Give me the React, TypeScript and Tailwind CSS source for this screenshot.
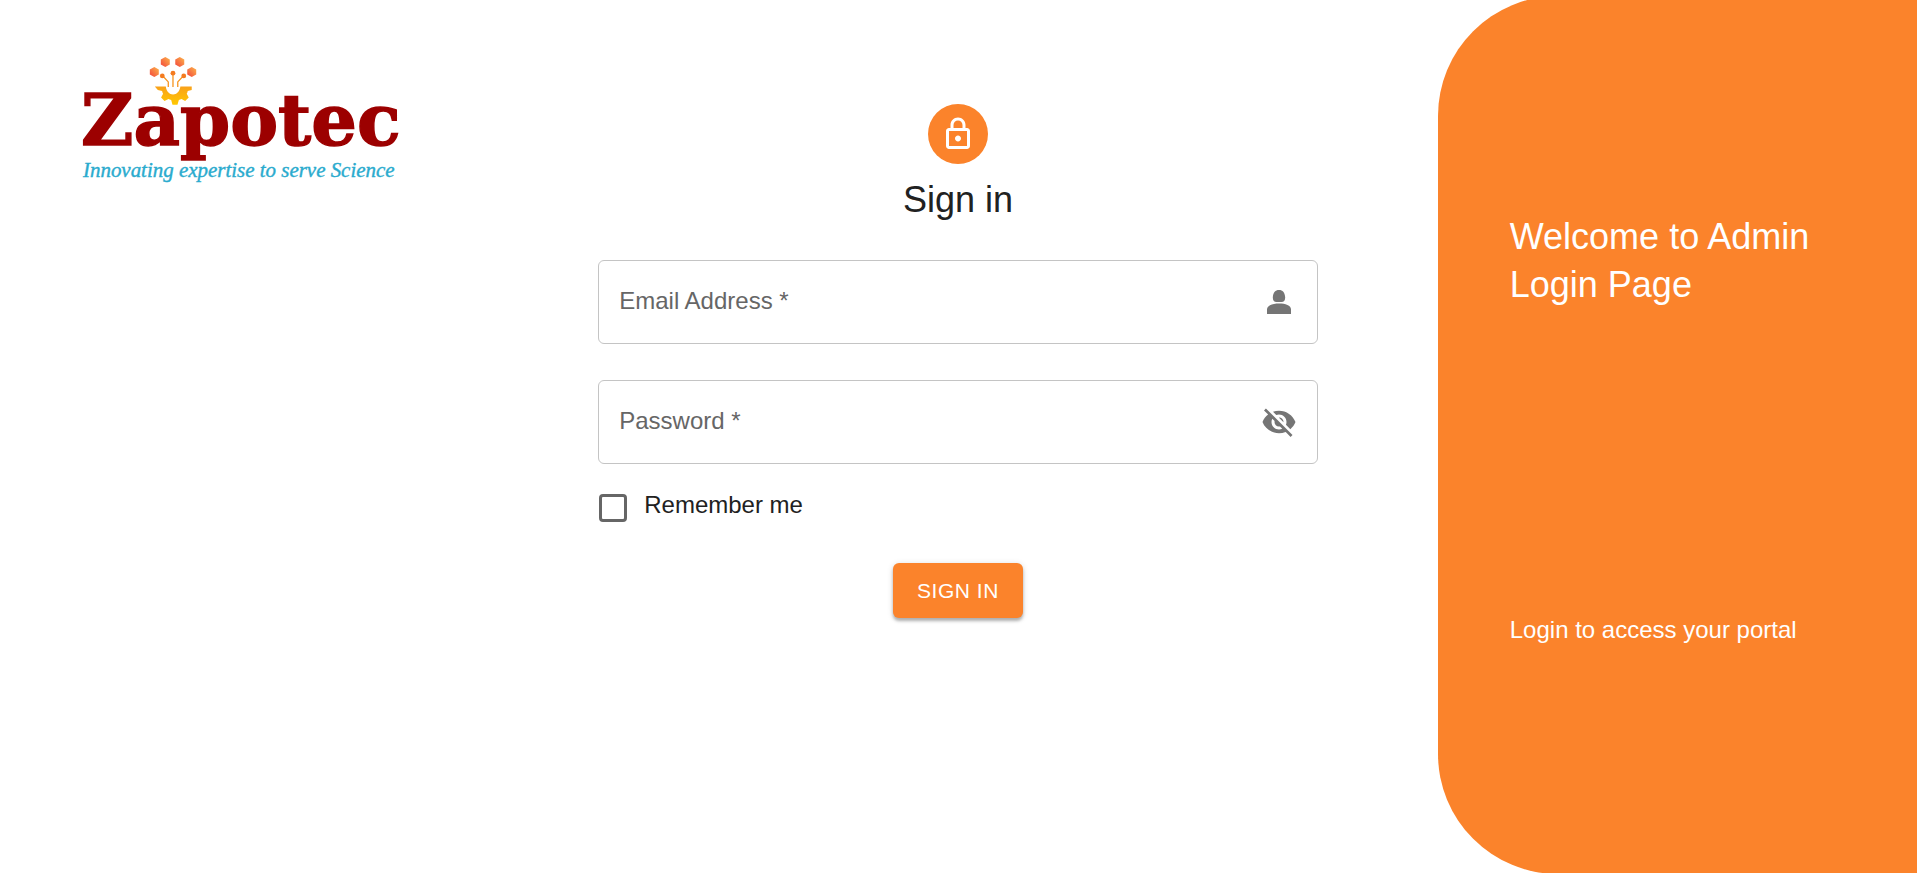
import React, { useState } from 'react';

const Logo: React.FC = () => (
  <svg viewBox="0 0 340 140" className="w-[340px] max-w-full" role="img" aria-label="Zapotec">
    <defs>
      <linearGradient id="seed" x1="1" y1="0" x2="0" y2="1">
        <stop offset="0" stopColor="#fdb64a" />
        <stop offset="1" stopColor="#f2453d" />
      </linearGradient>
      <linearGradient id="gear" x1="0" y1="0" x2="0" y2="1">
        <stop offset="0" stopColor="#f9a11b" />
        <stop offset="1" stopColor="#ffc800" />
      </linearGradient>
    </defs>
    <text
      x="11"
      y="95"
      fontSize="72"
      fontWeight="700"
      fill="#9c0000"
      stroke="#9c0000"
      strokeWidth="1.500"
      fontFamily="'DejaVu Serif', serif"
    >
      Zapotec
    </text>
    <text
      x="13"
      y="127"
      fontSize="21"
      fontStyle="italic"
      fill="#2aabce"
      stroke="#2aabce"
      strokeWidth="0.400"
      fontFamily="'Liberation Serif', serif"
    >
      Innovating expertise to serve Science
    </text>
    {/* crown of seeds */}
    <g fill="url(#seed)">
      <path d="M84.500 17l4.500 2.500v5l-4.500 2.500-4.500-2.500v-5z" />
      <path d="M95.500 7l4.500 2.500v5l-4.500 2.500-4.500-2.500v-5z" />
      <path d="M110 7l4.500 2.500v5l-4.500 2.500-4.500-2.500v-5z" />
      <path d="M122 17l4.500 2.500v5l-4.500 2.500-4.500-2.500v-5z" />
    </g>
    <g fill="none" stroke="#f7941e" strokeWidth="1.300">
      <path d="M93 26l5.500 6v5M103.200 24v13M113.500 26l-5.500 6v5" />
    </g>
    <g fill="#f47b20">
      <circle cx="92.500" cy="26" r="2.400" />
      <circle cx="103.200" cy="23.200" r="2.400" />
      <circle cx="114" cy="26" r="2.400" />
    </g>
    <path
      d="M85 36.500h11c.6 5 3.600 8 7.300 8s6.700-3 7.300-8H122v3.500l-4 1c-.2 1-.5 2-1 2.800l2 3.700-3.600 3.600-3.600-2c-1 .5-1.800.8-2.700 1l-1.400 4.700h-5l-1.300-4.700c-1-.2-1.900-.5-2.700-1l-4 2-3.400-3.600 2-3.700c-.5-.9-.8-1.800-1-2.800l-4.300-1z"
      fill="url(#gear)"
    />
  </svg>
);

const LockIcon: React.FC = () => (
  <svg viewBox="0 0 24 24" className="h-9 w-9" fill="currentColor" aria-hidden="true">
    <path d="M18 8h-1V6c0-2.760-2.240-5-5-5S7 3.240 7 6v2H6c-1.100 0-2 .9-2 2v10c0 1.100.9 2 2 2h12c1.100 0 2-.9 2-2V10c0-1.100-.9-2-2-2zM9 6c0-1.660 1.340-3 3-3s3 1.340 3 3v2H9V6zm9 14H6V10h12v10zm-6-3c1.100 0 2-.9 2-2s-.9-2-2-2-2 .9-2 2 .9 2 2 2z" />
  </svg>
);

const PersonIcon: React.FC = () => (
  <svg viewBox="0 0 24 24" className="h-9 w-9" fill="currentColor" aria-hidden="true">
    <path d="M12 4c2.500 0 3.800 1.700 4.100 4.600.2 2.100-.8 3.400-2.400 3.400h-3.400c-1.600 0-2.600-1.300-2.400-3.400C8.200 5.700 9.500 4 12 4zM4 20v-3.200c0-2.500 3.700-3.800 8-3.800s8 1.300 8 3.800V20z" />
  </svg>
);

const EyeOffIcon: React.FC = () => (
  <svg viewBox="0 0 24 24" className="h-9 w-9" fill="currentColor" aria-hidden="true">
    <path d="M12 7c2.760 0 5 2.240 5 5 0 .65-.13 1.260-.36 1.830l2.920 2.920c1.510-1.260 2.700-2.890 3.430-4.750-1.730-4.390-6-7.500-11-7.500-1.400 0-2.740.25-3.980.7l2.160 2.160C10.740 7.130 11.350 7 12 7zM2 4.270l2.280 2.280.46.46C3.080 8.300 1.780 10.020 1 12c1.730 4.390 6 7.500 11 7.500 1.550 0 3.030-.3 4.380-.84l.42.42L19.730 22 21 20.730 3.270 3 2 4.270zM7.530 9.800l1.550 1.550c-.05.21-.08.43-.08.65 0 1.660 1.340 3 3 3 .22 0 .44-.03.65-.08l1.550 1.550c-.67.33-1.410.53-2.200.53-2.760 0-5-2.240-5-5 0-.79.2-1.530.53-2.200zm4.310-.78l3.150 3.150.02-.16c0-1.660-1.340-3-3-3l-.17.01z" />
  </svg>
);

const inputClass =
  'peer h-[84px] w-full rounded-md border border-[#c4c4c4] bg-white pl-5 pr-20 text-2xl text-[#212121] outline-none hover:border-[#212121] focus:border-[#fb832b]';
const labelClass =
  'pointer-events-none absolute left-[21px] top-[25px] text-2xl text-[#666666] peer-focus:-top-3 peer-focus:bg-white peer-focus:px-1 peer-focus:text-lg peer-not-placeholder-shown:-top-3 peer-not-placeholder-shown:bg-white peer-not-placeholder-shown:px-1 peer-not-placeholder-shown:text-lg';

const App: React.FC = () => {
  const [showPassword, setShowPassword] = useState(false);

  return (
    <div className="grid min-h-screen grid-cols-[1fr_2fr_1fr] overflow-hidden bg-white font-['Liberation_Sans',Arial,sans-serif] text-[#212121]">
      <header className="px-[70px] pt-[50px]">
        <Logo />
      </header>

      <main className="flex flex-col items-center pl-[119px] pr-[120px] pt-[104px]">
        <div className="flex h-[60px] w-[60px] items-center justify-center rounded-full bg-[#fb832b] text-white">
          <LockIcon />
        </div>
        <h1 className="mt-3 text-4xl leading-[48px]">Sign in</h1>

        <form className="mt-9 flex w-full flex-col" onSubmit={(e) => e.preventDefault()}>
          <div className="relative">
            <input id="email" type="email" placeholder=" " autoComplete="email" className={inputClass} />
            <label htmlFor="email" className={labelClass}>
              Email Address *
            </label>
            <span className="absolute inset-y-0 right-[21px] flex items-center text-[#757575]">
              <PersonIcon />
            </span>
          </div>

          <div className="relative mt-9">
            <input
              id="password"
              type={showPassword ? 'text' : 'password'}
              placeholder=" "
              autoComplete="current-password"
              className={inputClass}
            />
            <label htmlFor="password" className={labelClass}>
              Password *
            </label>
            <button
              type="button"
              aria-label="Toggle password visibility"
              onClick={() => setShowPassword(!showPassword)}
              className="absolute inset-y-0 right-[21px] flex items-center text-[#757575]"
            >
              <EyeOffIcon />
            </button>
          </div>

          <div className="mt-[25px] flex items-start pl-px">
            <input
              id="remember"
              type="checkbox"
              className="mt-[5px] h-7 w-7 appearance-none rounded-sm border-3 border-[#666666] checked:border-[#fb832b] checked:bg-[#fb832b]"
            />
            <label htmlFor="remember" className="pl-[17px] text-2xl">
              Remember me
            </label>
          </div>

          <button
            type="submit"
            className="mt-[41px] self-center rounded-md bg-[#fb832b] px-6 py-3 text-[21px] leading-[31px] tracking-wide text-white shadow-[0_3px_3px_rgba(0,0,0,0.25),0_1px_6px_rgba(0,0,0,0.15)]"
          >
            SIGN IN
          </button>
        </form>
      </main>

      <aside className="-mb-px -mt-1 flex flex-col rounded-l-[120px] bg-[#fb832b] px-[72px] pt-[217px] text-white">
        <h2 className="text-4xl leading-[48px]">Welcome to Admin Login Page</h2>
        <p className="mt-[305px] text-2xl">Login to access your portal</p>
      </aside>
    </div>
  );
};

export default App;
